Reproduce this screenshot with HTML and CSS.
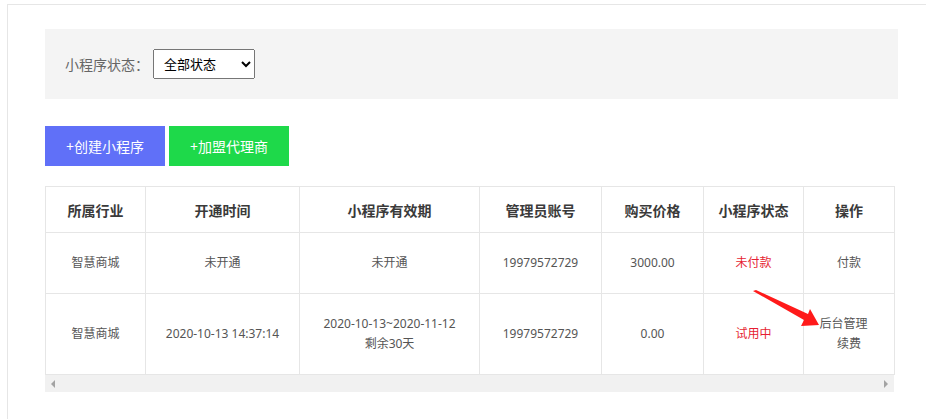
FILE: index.html
```html
<!DOCTYPE html>
<html lang="zh-CN">
<head>
    <meta charset="UTF-8">
    <meta name="viewport" content="width=device-width, initial-scale=1.0">
    <title>小程序列表</title>
    <link rel="stylesheet" href="styles.css">
</head>
<body>
    <div class="panel">
        <div class="filter">
            <label for="status">小程序状态：</label>
            <select id="status">
                <option>全部状态</option>
                <option>未付款</option>
                <option>试用中</option>
            </select>
        </div>
        <div class="actions">
            <button class="create">+创建小程序</button>
            <button class="agent">+加盟代理商</button>
        </div>
        <div class="table-wrap">
            <table>
                <colgroup>
                    <col style="width:100px">
                    <col style="width:154px">
                    <col style="width:180px">
                    <col style="width:122px">
                    <col style="width:102px">
                    <col style="width:100px">
                    <col style="width:91px">
                </colgroup>
                <thead>
                    <tr>
                        <th>所属行业</th>
                        <th>开通时间</th>
                        <th>小程序有效期</th>
                        <th>管理员账号</th>
                        <th>购买价格</th>
                        <th>小程序状态</th>
                        <th>操作</th>
                    </tr>
                </thead>
                <tbody>
                    <tr>
                        <td>智慧商城</td>
                        <td>未开通</td>
                        <td>未开通</td>
                        <td>19979572729</td>
                        <td>3000.00</td>
                        <td class="red">未付款</td>
                        <td><a href="#">付款</a></td>
                    </tr>
                    <tr>
                        <td>智慧商城</td>
                        <td>2020-10-13 14:37:14</td>
                        <td>2020-10-13~2020-11-12<br>剩余30天</td>
                        <td>19979572729</td>
                        <td>0.00</td>
                        <td class="red">试用中</td>
                        <td><a href="#" class="manage">后台管理</a><br><a href="#">续费</a></td>
                    </tr>
                </tbody>
            </table>
            <div class="scrollbar">
                <span class="arrow left"></span>
                <span class="arrow right"></span>
            </div>
            <!-- 标注箭头 -->
            <svg class="mark" width="80" height="45" viewBox="0 0 80 45">
                <polygon points="0,1 3,0 55,24 57,19 66,35 48,36 51,30" fill="#ff1a1a"/>
            </svg>
        </div>
    </div>
</body>
</html>
```

FILE: styles.css
```css
body {
    margin: 0;
    font-family: "Noto Sans", "Noto Sans CJK SC", sans-serif;
    background: #fff;
    color: #555;
}
.panel {
    box-sizing: border-box;
    min-height: 415px;
    margin: 4px 0 0 7px;
    padding: 24px 0 20px 37px;
    border-top: 1px solid #e6e6e6;
    border-left: 1px solid #e6e6e6;
}
.filter {
    width: 813px;
    height: 30px;
    padding: 20px;
    background: #f4f4f4;
    display: flex;
    align-items: center;
    font-size: 14px;
    color: #666;
}
.filter select {
    width: 102px;
    height: 30px;
    margin-left: 4px;
    font-family: "Noto Sans", "Noto Sans CJK SC", sans-serif;
    font-size: 13px;
    padding-left: 6px;
    color: #000;
}
.actions {
    margin-top: 27px;
    display: flex;
    gap: 4px;
}
button {
    width: 120px;
    height: 40px;
    border: none;
    color: #fff;
    font-size: 14px;
    font-family: "Noto Sans", "Noto Sans CJK SC", sans-serif;
    cursor: pointer;
}
.create {
    background-color: #6070f8;
}
.agent {
    background-color: #1ed94a;
}
.table-wrap {
    position: relative;
    margin-top: 20px;
    width: 849px;
}
table {
    width: 849px;
    table-layout: fixed;
    border-collapse: collapse;
    text-align: center;
    font-size: 12px;
}
th, td {
    border: 1px solid #e6e6e6;
    padding: 0 2px;
}
th {
    height: 45px;
    font-size: 14px;
    font-weight: bold;
    color: #3a3a3a;
}
td {
    padding-top: 20px;
    padding-bottom: 20px;
    line-height: 20px;
}
.red {
    color: #e61e32;
}
td a {
    color: #555;
    text-decoration: none;
}
td a.manage {
    margin-right: 11px;
}
.scrollbar {
    height: 17px;
    background: #f1f1f1;
    display: flex;
    justify-content: space-between;
    align-items: center;
    padding: 0 6px;
}
.arrow {
    width: 0;
    height: 0;
    border-top: 4px solid transparent;
    border-bottom: 4px solid transparent;
}
.arrow.left {
    border-right: 4px solid #a3a3a3;
}
.arrow.right {
    border-left: 4px solid #a3a3a3;
}
.mark {
    position: absolute;
    left: 708px;
    top: 104px;
}
```
